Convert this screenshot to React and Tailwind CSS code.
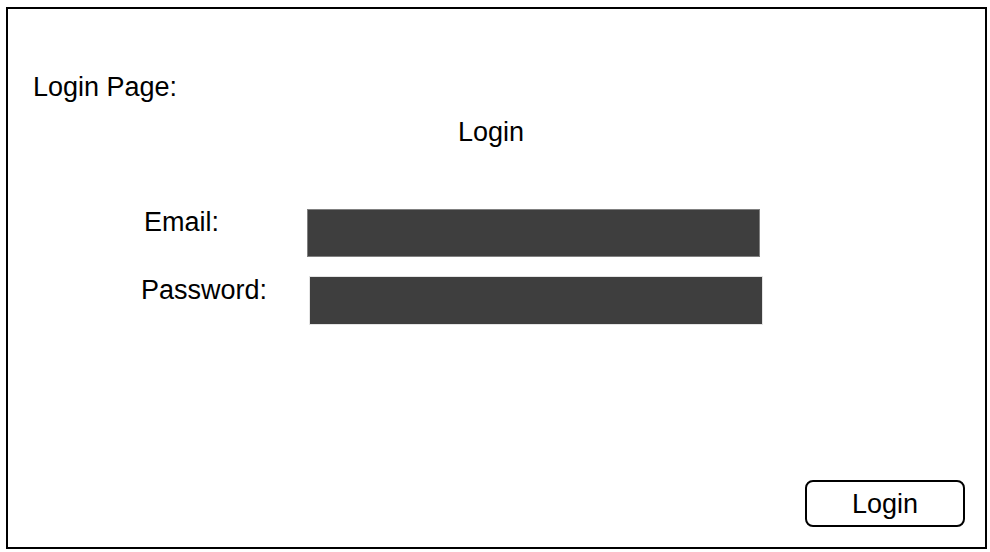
export default function App() {
  return (
    <div className="min-h-screen bg-white pt-[7px] pr-[3px] pb-[3px] pl-[6px] font-['Liberation_Sans',Arial,sans-serif] text-[27px] leading-8 text-black">
      <form
        onSubmit={(e) => e.preventDefault()}
        className="flex min-h-[calc(100vh-10px)] flex-col border-2 border-black pt-[62px] pr-5 pb-5 pl-[25px]"
      >
        <p>Login Page:</p>
        <h1 className="mt-[13px] pr-4 text-center">Login</h1>
        <div className="mt-[61px] mr-[202px] ml-[108px] flex flex-col gap-[19px]">
          <div className="flex items-start pr-[3px]">
            <label htmlFor="email" className="w-[166px] shrink-0 pl-[3px] leading-[26px]">
              Email:
            </label>
            <input
              id="email"
              type="email"
              className="block h-12 w-full border border-[#808080] bg-[#3e3e3e] px-3 text-white outline-none"
            />
          </div>
          <div className="flex items-start">
            <label htmlFor="password" className="w-[168px] shrink-0 leading-[28px]">
              Password:
            </label>
            <input
              id="password"
              type="password"
              className="block h-[49px] w-full border border-[#e4e4e4] bg-[#3e3e3e] px-3 text-white outline-none"
            />
          </div>
        </div>
        <button
          type="submit"
          className="mt-auto h-[47px] w-40 self-end rounded-lg border-2 border-black bg-white"
        >
          Login
        </button>
      </form>
    </div>
  );
}
